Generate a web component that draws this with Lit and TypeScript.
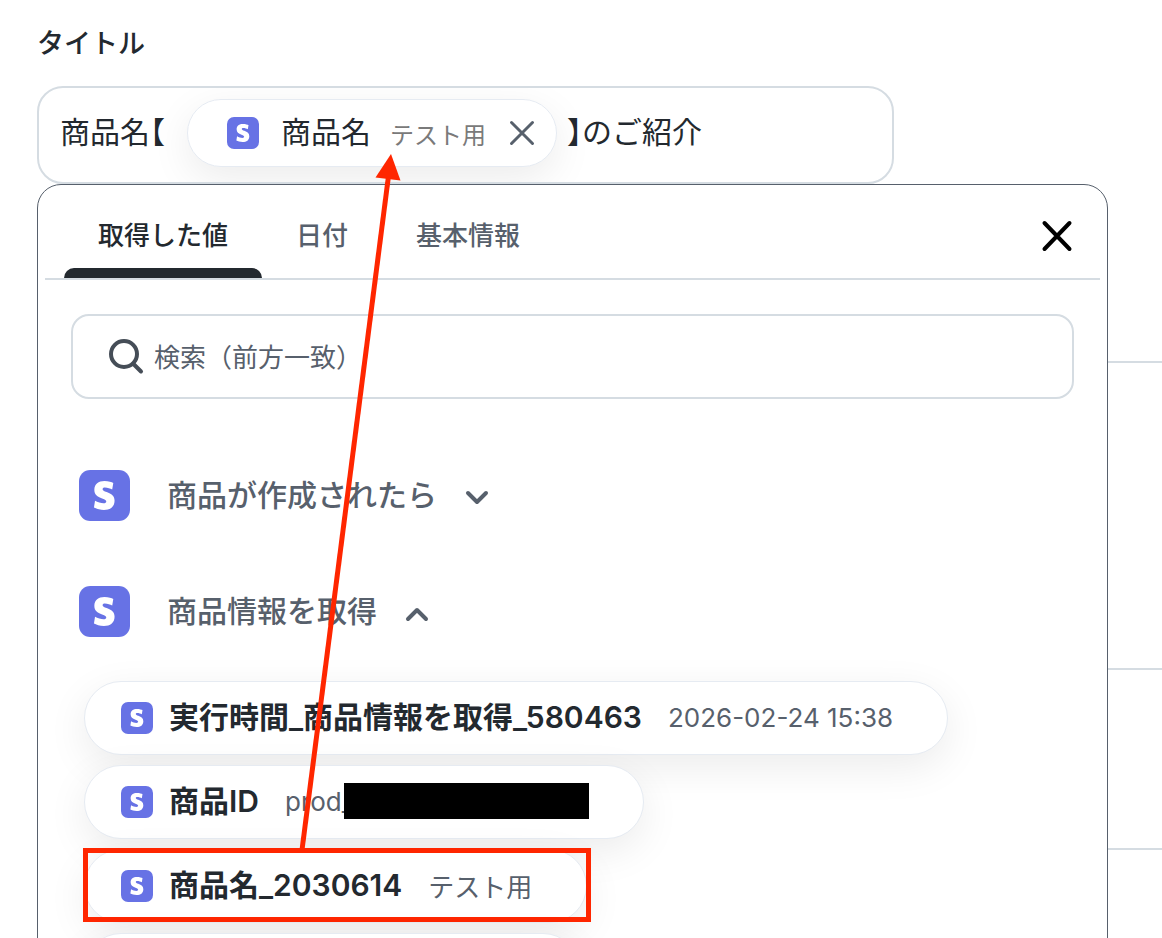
import { LitElement, html, css, svg, nothing } from "lit";
import { customElement, property, state } from "lit/decorators.js";

const sharedText = css`
  button,
  input {
    font: inherit;
    color: inherit;
    margin: 0;
    padding: 0;
    border: 0;
    background: none;
    outline: none;
    letter-spacing: inherit;
  }
  button {
    cursor: pointer;
  }
  svg {
    display: block;
  }
`;

@customElement("service-icon")
export class ServiceIcon extends LitElement {
  static styles = css`
    :host {
      display: block;
      flex: none;
    }
    svg {
      display: block;
      width: 100%;
      height: 100%;
    }
  `;

  render() {
    return html`<svg viewBox="0 0 50 50" aria-hidden="true">
      <rect width="50" height="50" rx="11" fill="#6772e5" />
      <path
        transform="translate(10.6 10.8) scale(1.18)"
        fill="#fff"
        d="M13.976 9.15c-2.172-.806-3.356-1.426-3.356-2.409 0-.831.683-1.305 1.901-1.305 2.227 0 4.515.858 6.09 1.631l.89-5.494C18.252.975 15.697 0 12.165 0 9.667 0 7.589.654 6.104 1.872 4.56 3.147 3.757 4.992 3.757 7.218c0 4.039 2.467 5.76 6.476 7.219 2.585.92 3.445 1.574 3.445 2.583 0 .98-.84 1.545-2.354 1.545-1.875 0-4.965-.921-6.99-2.109l-.9 5.555C5.175 22.99 8.385 24 11.714 24c2.641 0 4.843-.624 6.328-1.813 1.664-1.305 2.525-3.236 2.525-5.732 0-4.128-2.524-5.851-6.594-7.305h.003z"
      />
    </svg>`;
  }
}

interface ValueItem {
  name: string;
  sample: string;
  masked?: boolean;
  marked?: boolean;
}

@customElement("value-chip")
export class ValueChip extends LitElement {
  @property({ attribute: false }) item?: ValueItem;

  static styles = [
    sharedText,
    css`
      :host {
        display: block;
        position: relative;
      }
      .chip {
        display: flex;
        align-items: center;
        height: 74px;
        box-sizing: border-box;
        padding: 0 54px 0 36px;
        border: 1px solid #e6ebf2;
        border-radius: 37px;
        background: #fff;
        box-shadow: 0 12px 40px rgba(0, 0, 0, 0.08);
        white-space: nowrap;
      }
      .blank {
        width: 496px;
      }
      .icon {
        width: 32px;
        height: 32px;
        margin-right: 16px;
      }
      .name {
        padding-bottom: 6px;
        font-size: 30px;
        font-weight: 600;
        color: #23292f;
      }
      .sample {
        display: flex;
        align-items: center;
        margin-left: 26px;
        padding-bottom: 2px;
        font-size: 26px;
        color: #57606c;
      }
      .mask {
        width: 245px;
        height: 36px;
        margin-left: -10px;
        background: #000;
      }
      .mark {
        position: absolute;
        inset: -1px -4px 1px -1px;
        border: 5px solid #ff2600;
        pointer-events: none;
      }
    `,
  ];

  render() {
    if (!this.item) return html`<div class="chip blank"></div>`;
    const { name, sample, masked, marked } = this.item;
    return html`<button class="chip" type="button">
        <service-icon class="icon"></service-icon>
        <span class="name">${name}</span>
        <span class="sample"
          >${sample}${masked ? html`<span class="mask"></span>` : nothing}</span
        >
      </button>
      ${marked ? html`<div class="mark"></div>` : nothing}`;
  }
}

const chevron = (open: boolean) => html`<svg
  width="24"
  height="16"
  viewBox="0 0 24 16"
  fill="none"
  stroke="#57606c"
  stroke-width="4"
  stroke-linecap="round"
  stroke-linejoin="round"
  aria-hidden="true"
>
  ${open ? svg`<path d="M3 13l9-9 9 9" />` : svg`<path d="M3 3l9 9 9-9" />`}
</svg>`;

@customElement("value-picker")
export class ValuePicker extends LitElement {
  @state() private tab = 0;

  private tabs = ["取得した値", "日付", "基本情報"];

  private groups: { title: string; open: boolean; items: (ValueItem | undefined)[] }[] = [
    { title: "商品が作成されたら", open: false, items: [] },
    {
      title: "商品情報を取得",
      open: true,
      items: [
        { name: "実行時間_商品情報を取得_580463", sample: "2026-02-24 15:38" },
        { name: "商品ID", sample: "prod_", masked: true },
        { name: "商品名_2030614", sample: "テスト用", marked: true },
        undefined,
      ],
    },
  ];

  static styles = [
    sharedText,
    css`
      :host {
        display: block;
        box-sizing: border-box;
        border: 1px solid #57606c;
        border-radius: 24px;
        background: #fff;
      }
      .head {
        display: flex;
        align-items: stretch;
        height: 95px;
        box-sizing: border-box;
        margin: 0 7px;
        padding: 0 26px 0 19px;
        border-bottom: 2px solid #d5dce2;
      }
      .tab {
        display: flex;
        align-items: center;
        position: relative;
        padding: 4px 34px 0;
        font-size: 26px;
        font-weight: 500;
        color: #57606c;
      }
      .tab.on {
        color: #23292f;
      }
      .tab.on::after {
        content: "";
        position: absolute;
        left: 0;
        right: 0;
        bottom: 0;
        height: 10px;
        border-radius: 10px 10px 0 0;
        background: #23292f;
      }
      .close {
        align-self: center;
        margin: 8px 0 0 auto;
      }
      .search {
        display: flex;
        align-items: center;
        gap: 10px;
        height: 85px;
        box-sizing: border-box;
        margin: 34px 33px 0;
        padding: 0 36px 0 35px;
        border: 2px solid #d5dce2;
        border-radius: 18px;
      }
      .search input {
        flex: 1;
        min-width: 0;
        padding-top: 2px;
        font-size: 26px;
      }
      .search input::placeholder {
        color: #57606c;
        opacity: 1;
      }
      .groups {
        padding: 60px 41px 0;
        display: flex;
        flex-direction: column;
        gap: 44px;
      }
      .group {
        display: flex;
        align-items: center;
        height: 72px;
        font-size: 30px;
        font-weight: 500;
        color: #57606c;
      }
      .group span {
        padding-bottom: 4px;
      }
      .badge {
        width: 51px;
        height: 51px;
        margin-right: 37px;
      }
      .group svg {
        margin: 6px 0 0 28px;
      }
      .items {
        display: flex;
        flex-direction: column;
        align-items: flex-start;
        gap: 10px;
        padding: 34px 5px 40px;
      }
    `,
  ];

  render() {
    return html`
      <div class="head" role="tablist">
        ${this.tabs.map(
          (label, i) => html`<button
            type="button"
            role="tab"
            class=${i === this.tab ? "tab on" : "tab"}
            aria-selected=${i === this.tab}
            @click=${() => (this.tab = i)}
          >
            ${label}
          </button>`
        )}
        <button class="close" type="button" aria-label="閉じる">
          <svg width="34" height="34" viewBox="0 0 34 34" stroke="#000" stroke-width="4" stroke-linecap="round">
            <path d="M4.500 4l25 26M29.500 4l-25 26" />
          </svg>
        </button>
      </div>
      <label class="search">
        <svg width="36" height="36" viewBox="0 0 36 36" fill="none" stroke="#454d57" stroke-width="4" stroke-linecap="round" aria-hidden="true">
          <circle cx="16" cy="15" r="13" />
          <path d="M25.500 25l7.500 7.500" />
        </svg>
        <input type="text" aria-label="検索" placeholder="検索（前方一致）" />
      </label>
      <div class="groups">
        ${this.groups.map(
          (g) => html`<section>
            <button class="group" type="button" aria-expanded=${g.open}>
              <service-icon class="badge"></service-icon>
              <span>${g.title}</span>
              ${chevron(g.open)}
            </button>
            ${g.open
              ? html`<div class="items">
                  ${g.items.map((item) => html`<value-chip .item=${item}></value-chip>`)}
                </div>`
              : nothing}
          </section>`
        )}
      </div>
    `;
  }
}

@customElement("app-root")
export class AppRoot extends LitElement {
  static styles = [
    sharedText,
    css`
      :host {
        display: block;
        position: relative;
        height: 100vh;
        overflow: hidden;
        background: #fff;
        color: #23292f;
        font-family: Inter, "Noto Sans CJK JP", sans-serif;
      }
      .title {
        display: block;
        padding: 24px 37px 22px;
        font-size: 27px;
        font-weight: 500;
        line-height: 40px;
      }
      .anchor {
        position: relative;
        padding: 0 54px 0 37px;
      }
      .field {
        display: flex;
        align-items: center;
        width: 80%;
        height: 98px;
        box-sizing: border-box;
        padding: 0 21px 4px;
        border: 2px solid #d5dce2;
        border-radius: 26px;
        overflow: hidden;
        font-size: 30px;
        font-feature-settings: "halt";
      }
      .before {
        width: 127px;
        padding-bottom: 6px;
      }
      .after {
        flex: 1;
        min-width: 0;
        padding-bottom: 6px;
      }
      .token {
        display: flex;
        align-items: center;
        flex: none;
        height: 68px;
        box-sizing: border-box;
        padding: 0 20px 0 39px;
        margin-right: 10px;
        border: 1px solid #e6ebf2;
        border-radius: 34px;
        background: #fff;
        box-shadow: 0 12px 40px rgba(0, 0, 0, 0.08);
      }
      .icon {
        width: 32px;
        height: 32px;
        margin-right: 22px;
      }
      .name {
        padding-bottom: 6px;
      }
      .sample {
        margin: 0 22px 0 19px;
        font-size: 24px;
        color: #7a7a7a;
      }
      .picker {
        position: absolute;
        top: 100%;
        left: 37px;
        right: 54px;
        z-index: 1;
      }
      .rows {
        display: grid;
        grid-template-rows: 179px 307px 180px;
        margin-left: 37px;
      }
      .row {
        border-bottom: 2px solid #d5dce2;
      }
      .arrow {
        position: absolute;
        left: 0;
        top: 0;
        z-index: 2;
        pointer-events: none;
      }
    `,
  ];

  render() {
    return html`
      <label class="title" for="before">タイトル</label>
      <div class="anchor">
        <div class="field">
          <input class="before" id="before" type="text" .value=${"商品名【"} />
          <span class="token">
            <service-icon class="icon"></service-icon>
            <span class="name">商品名</span>
            <span class="sample">テスト用</span>
            <button type="button" aria-label="削除">
              <svg width="28" height="28" viewBox="0 0 28 28" stroke="#57606c" stroke-width="3" stroke-linecap="round">
                <path d="M3.500 3.500l21 21M24.500 3.500l-21 21" />
              </svg>
            </button>
          </span>
          <input class="after" type="text" aria-label="タイトル" .value=${"】のご紹介"} />
        </div>
        <value-picker class="picker"></value-picker>
      </div>
      <div class="rows">
        <div class="row"></div>
        <div class="row"></div>
        <div class="row"></div>
      </div>
      <svg class="arrow" width="480" height="860" viewBox="0 0 480 860" aria-hidden="true">
        <path d="M302 850L388.500 176" stroke="#ff2600" stroke-width="5" />
        <path d="M391 154L375.500 177.500L400.500 180.500Z" fill="#ff2600" />
      </svg>
    `;
  }
}
